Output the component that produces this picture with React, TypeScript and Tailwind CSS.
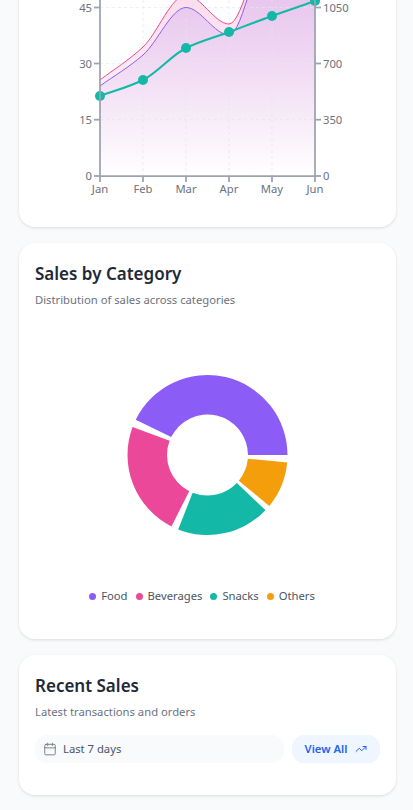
import { Calendar, TrendingUp } from "lucide-react";

const months = ["Jan", "Feb", "Mar", "Apr", "May", "Jun"];
const xs = [100, 143, 186, 229, 272, 315];
const leftTicks = [
  { y: 7.5, label: "45" },
  { y: 63.5, label: "30" },
  { y: 119.7, label: "15" },
  { y: 176, label: "0" },
];
const rightTicks = ["1050", "700", "350", "0"];

const pinkY = [80, 47, -5, 24, -62, -40];
const purpleY = [86, 55, 7.5, 35, -58, -36];
const tealY = [96, 80, 48, 32, 16, 1];

// monotone cubic through the points, same look as the chart lib
function curve(ys: number[]) {
  const step = 43;
  const slopes = ys.slice(1).map((y, i) => (y - ys[i]) / step);
  const tangents = ys.map((_, i) => {
    if (i === 0) return slopes[0];
    if (i === ys.length - 1) return slopes[i - 1];
    const a = slopes[i - 1];
    const b = slopes[i];
    return a * b <= 0 ? 0 : (2 * a * b) / (a + b);
  });
  let d = `M${xs[0]} ${ys[0]}`;
  for (let i = 0; i < ys.length - 1; i++) {
    const c = step / 3;
    d += ` C${xs[i] + c} ${ys[i] + tangents[i] * c} ${xs[i + 1] - c} ${ys[i + 1] - tangents[i + 1] * c} ${xs[i + 1]} ${ys[i + 1]}`;
  }
  return d;
}

function TrendChart() {
  return (
    <svg className="block" width={345} height={260} viewBox="35 -60 345 260">
      <defs>
        <linearGradient id="pinkFill" gradientUnits="userSpaceOnUse" x1="0" y1="-70" x2="0" y2="176">
          <stop offset="0" stopColor="#ec4899" stopOpacity={0.26} />
          <stop offset="1" stopColor="#ec4899" stopOpacity={0} />
        </linearGradient>
        <linearGradient id="purpleFill" gradientUnits="userSpaceOnUse" x1="0" y1="-70" x2="0" y2="176">
          <stop offset="0" stopColor="#8b5cf6" stopOpacity={0.24} />
          <stop offset="1" stopColor="#8b5cf6" stopOpacity={0} />
        </linearGradient>
      </defs>
      <path d={`${curve(pinkY)} L315 176 L100 176 Z`} fill="url(#pinkFill)" />
      <path d={`${curve(purpleY)} L315 176 L100 176 Z`} fill="url(#purpleFill)" />
      {leftTicks.slice(0, 3).map((t) => (
        <line key={t.y} x1={100} x2={315} y1={t.y} y2={t.y} stroke="#e5e7eb" strokeDasharray="3 3" opacity={0.7} />
      ))}
      {xs.slice(1, 5).map((x) => (
        <line key={x} x1={x} x2={x} y1={-60} y2={176} stroke="#e5e7eb" strokeDasharray="3 3" opacity={0.7} />
      ))}
      <path d={curve(pinkY)} fill="none" stroke="#ec4899" strokeWidth={1} />
      <path d={curve(purpleY)} fill="none" stroke="#8b5cf6" strokeWidth={1} />
      <path d={curve(tealY)} fill="none" stroke="#14b8a6" strokeWidth={2} />
      {xs.map((x, i) => (
        <circle key={x} cx={x} cy={tealY[i]} r={5} fill="#14b8a6" />
      ))}
      <g stroke="#9ca3af" strokeWidth={1.75} fill="none">
        <line x1={100} x2={100} y1={-60} y2={176} />
        <line x1={315} x2={315} y1={-60} y2={176} />
        <line x1={100} x2={315} y1={176} y2={176} />
        {leftTicks.map((t) => (
          <g key={t.y}>
            <line x1={94} x2={100} y1={t.y} y2={t.y} />
            <line x1={315} x2={321} y1={t.y} y2={t.y} />
          </g>
        ))}
        {xs.map((x) => (
          <line key={x} x1={x} x2={x} y1={176} y2={182} />
        ))}
      </g>
      <g fill="#6b7280" fontSize={11.25}>
        {leftTicks.map((t) => (
          <text key={t.y} x={92} y={t.y + 4} textAnchor="end">{t.label}</text>
        ))}
        {leftTicks.map((t, i) => (
          <text key={t.y} x={323} y={t.y + 4}>{rightTicks[i]}</text>
        ))}
        {months.map((m, i) => (
          <text key={m} x={xs[i]} y={193} textAnchor="middle">{m}</text>
        ))}
      </g>
    </svg>
  );
}

const slices = [
  { from: 206.2, to: 360, color: "#8b5cf6" },
  { from: 5.3, to: 39.5, color: "#f59e0b" },
  { from: 43.6, to: 111.5, color: "#14b8a6" },
  { from: 116.8, to: 200.5, color: "#ec4899" },
];

function slicePath(from: number, to: number) {
  const at = (deg: number, r: number) => {
    const a = (deg * Math.PI) / 180;
    return `${(r * Math.cos(a)).toFixed(2)} ${(r * Math.sin(a)).toFixed(2)}`;
  };
  const big = to - from > 180 ? 1 : 0;
  return `M${at(from, 80)} A80 80 0 ${big} 1 ${at(to, 80)} L${at(to, 40.5)} A40.5 40.5 0 ${big} 0 ${at(from, 40.5)} Z`;
}

const legend = [
  { name: "Food", dot: "bg-[#8b5cf6]" },
  { name: "Beverages", dot: "bg-[#ec4899]" },
  { name: "Snacks", dot: "bg-[#14b8a6]" },
  { name: "Others", dot: "bg-[#f59e0b]" },
];

function CardHeader({ title, subtitle }: { title: string; subtitle: string }) {
  return (
    <div>
      <h2 className="text-[17px] leading-7 font-semibold text-[#1f2937]">{title}</h2>
      <p className="mt-[4px] text-[11.25px] leading-4 text-[#6b7280]">{subtitle}</p>
    </div>
  );
}

export default function App() {
  return (
    <div className="h-[810px] overflow-hidden bg-[#f9fafb] font-['Noto_Sans',sans-serif]">
      <div className="-mt-[77px] ml-[19px] flex w-[377px] flex-col gap-4">
        <section className="rounded-2xl bg-white px-4 pt-[17px] pb-[27px] shadow-[0_1px_3px_rgba(0,0,0,0.12)]">
          <TrendChart />
        </section>

        <section className="h-[396px] rounded-2xl bg-white px-4 pt-[17px] shadow-[0_1px_3px_rgba(0,0,0,0.12)]">
          <CardHeader title="Sales by Category" subtitle="Distribution of sales across categories" />
          <div className="mt-[62px] flex justify-center">
            <svg width={170} height={170} viewBox="-84.5 -85 170 170" className="block">
              {slices.map((s) => (
                <path key={s.color} d={slicePath(s.from, s.to)} fill={s.color} />
              ))}
            </svg>
          </div>
          <div className="mt-[48px] flex items-center justify-center gap-2 pr-[11px]">
            {legend.map((l) => (
              <div key={l.name} className="flex items-center gap-[5px] text-[11.25px] leading-4 text-[#4b5563]">
                <span className={`h-[7px] w-[7px] rounded-full ${l.dot}`} />
                {l.name}
              </div>
            ))}
          </div>
        </section>

        <section className="h-[140px] rounded-2xl bg-white px-4 pt-[17px] shadow-[0_1px_3px_rgba(0,0,0,0.12)]">
          <CardHeader title="Recent Sales" subtitle="Latest transactions and orders" />
          <div className="mt-[15px] flex h-7 gap-2">
            <div className="flex flex-1 items-center gap-[6px] rounded-xl bg-[#f8fafc] pl-2 text-[11.25px] text-[#4b5563]">
              <Calendar size={14} strokeWidth={1.5} className="text-[#6b7280]" />
              Last 7 days
            </div>
            <button className="flex w-[88px] items-center justify-center gap-2 rounded-xl bg-[#eff6ff] text-[11.25px] font-semibold text-[#2563eb]">
              View All
              <TrendingUp size={12} strokeWidth={2} />
            </button>
          </div>
        </section>
      </div>
    </div>
  );
}
